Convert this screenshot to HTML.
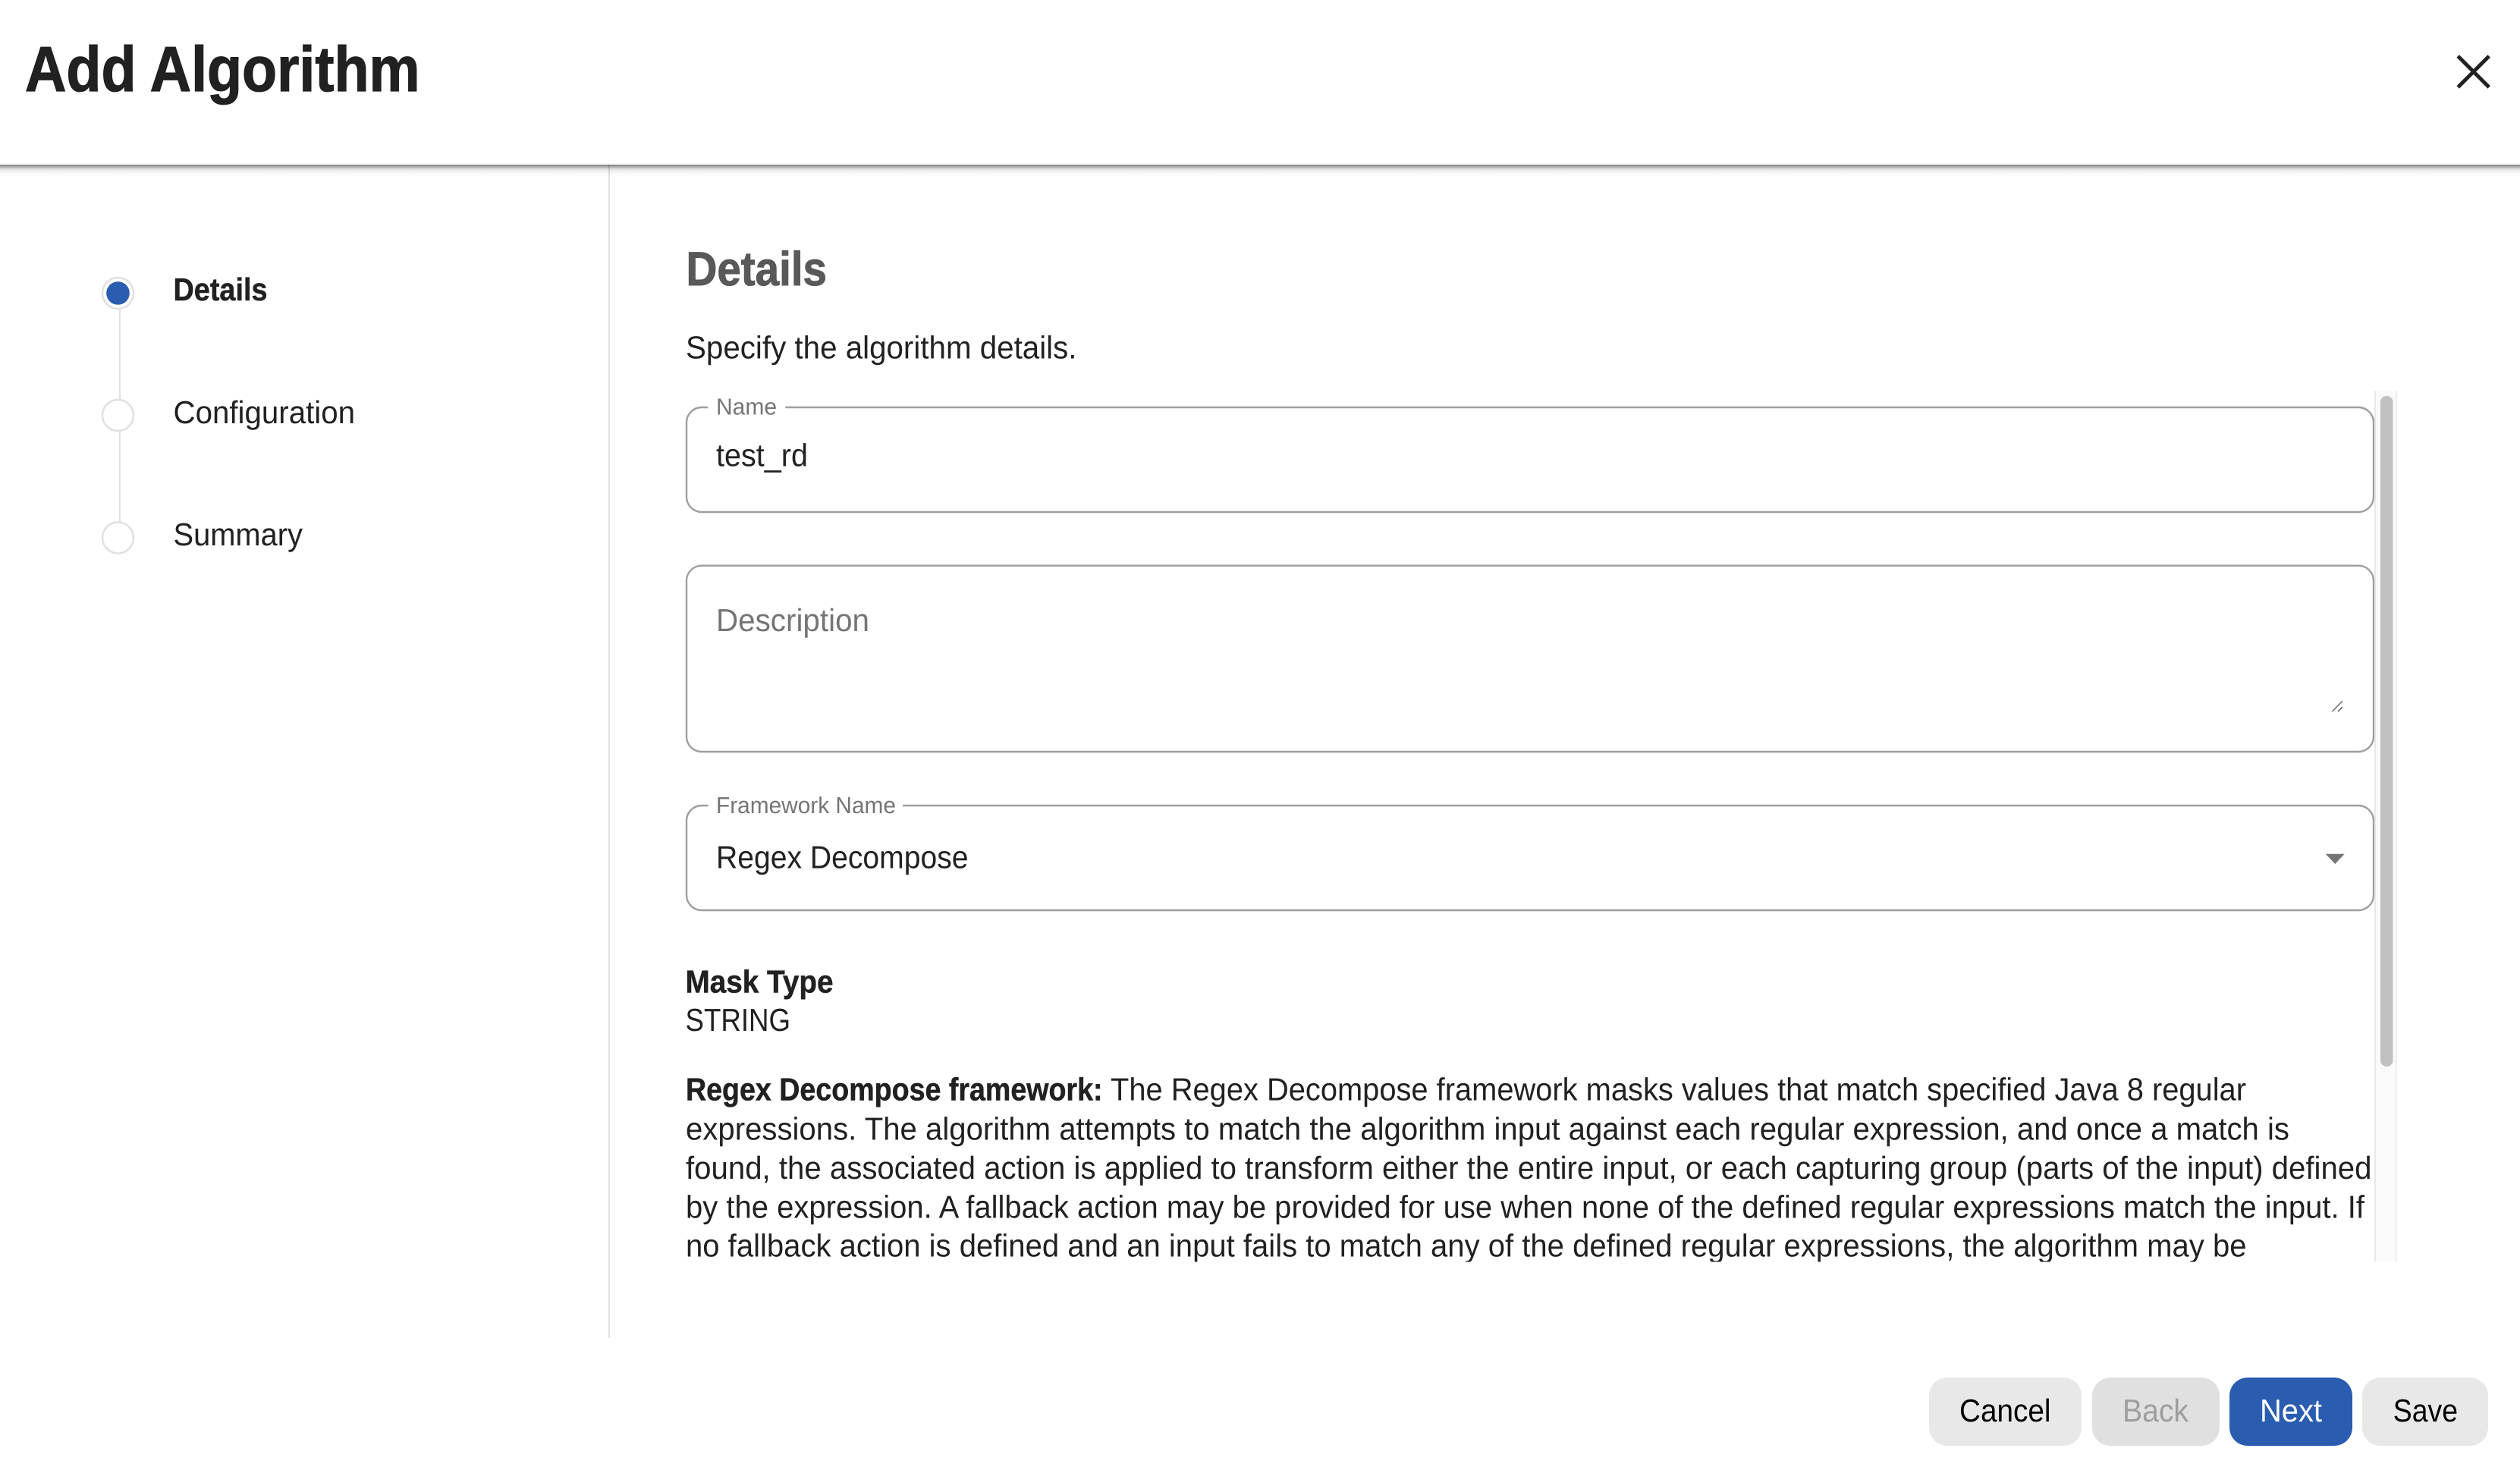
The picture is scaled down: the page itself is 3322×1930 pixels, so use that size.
<!DOCTYPE html>
<html lang="en">
<head>
<meta charset="utf-8">
<title>Add Algorithm</title>
<style>
html,body{margin:0;padding:0;background:#fff;width:3322px;height:1930px;overflow:hidden}
svg{display:block;position:absolute;left:0;top:0}
text{font-family:"Liberation Sans",Arial,sans-serif;fill:#212121;font-size:42px;text-rendering:geometricPrecision}
.b{font-weight:700;stroke:#212121;stroke-width:.5px}
.l{font-size:30.5px;fill:#757575}
.f{fill:none;stroke:#9e9e9e;stroke-width:2.4}
</style>
</head>
<body>
<svg width="3322" height="1930" viewBox="0 0 3322 1930" xmlns="http://www.w3.org/2000/svg">
<defs>
<linearGradient id="sh" x1="0" y1="0" x2="0" y2="1">
<stop offset="0" stop-color="#000" stop-opacity=".5"/>
<stop offset=".15" stop-color="#000" stop-opacity=".36"/>
<stop offset=".35" stop-color="#000" stop-opacity=".13"/>
<stop offset=".6" stop-color="#000" stop-opacity=".04"/>
<stop offset="1" stop-color="#000" stop-opacity="0"/>
</linearGradient>
<clipPath id="cl"><rect x="890" y="1270" width="2240" height="393.5"/></clipPath>
</defs>
<rect width="3322" height="1930" fill="#fff"/>

<!-- side divider -->
<rect x="802" y="217" width="2" height="1547" fill="#e0e0e0"/>

<!-- header -->
<text class="b" x="33" y="120" style="font-size:84px;stroke-width:1.2px" textLength="520.5" lengthAdjust="spacingAndGlyphs">Add Algorithm</text>
<path d="M3240.2 74 L3281.2 115 M3281.2 74 L3240.2 115" fill="none" stroke="#212121" stroke-width="5"/>
<rect x="0" y="217" width="3322" height="16" fill="url(#sh)"/>

<!-- stepper -->
<rect x="157" y="406" width="2" height="122" fill="#e0e0e0"/>
<rect x="157" y="567" width="2" height="123" fill="#e0e0e0"/>
<circle cx="155.5" cy="386.5" r="20.5" fill="#fff" stroke="#e0e0e0" stroke-width="2.5"/>
<circle cx="155.5" cy="386.5" r="15.3" fill="#2a5db0"/>
<circle cx="155.5" cy="547.5" r="20.5" fill="#fff" stroke="#e0e0e0" stroke-width="2.5"/>
<circle cx="155.5" cy="709" r="20.5" fill="#fff" stroke="#e0e0e0" stroke-width="2.5"/>
<text class="b" x="228.5" y="396" textLength="124" lengthAdjust="spacingAndGlyphs">Details</text>
<text x="228.5" y="558" textLength="239.5" lengthAdjust="spacingAndGlyphs">Configuration</text>
<text x="228.5" y="719" textLength="170.5" lengthAdjust="spacingAndGlyphs">Summary</text>

<!-- heading -->
<text class="b" x="904.5" y="376" style="font-size:63px;fill:#595959;stroke:#595959;stroke-width:1px" textLength="185.5" lengthAdjust="spacingAndGlyphs">Details</text>
<text x="904" y="472.5" textLength="515.5" lengthAdjust="spacingAndGlyphs">Specify the algorithm details.</text>

<!-- Name field -->
<path class="f" d="M933.3 537 H925 A20 20 0 0 0 905 557 V655 A20 20 0 0 0 925 675 H3109 A20 20 0 0 0 3129 655 V557 A20 20 0 0 0 3109 537 H1035.3"/>
<text class="l" x="944" y="546.7" textLength="80" lengthAdjust="spacingAndGlyphs">Name</text>
<text x="944" y="614.3" textLength="121" lengthAdjust="spacingAndGlyphs">test_rd</text>

<!-- Description field -->
<rect class="f" x="905" y="745.7" width="2224" height="245.3" rx="20" ry="20"/>
<text x="944" y="832" style="fill:#757575" textLength="202" lengthAdjust="spacingAndGlyphs">Description</text>
<path d="M3074.5 938 L3088 924 M3082 938 L3088 932" fill="none" stroke="#6e6e6e" stroke-width="1.6"/>

<!-- Framework field -->
<path class="f" d="M933.6 1062 H925 A20 20 0 0 0 905 1082 V1180 A20 20 0 0 0 925 1200 H3109 A20 20 0 0 0 3129 1180 V1082 A20 20 0 0 0 3109 1062 H1190"/>
<text class="l" x="944" y="1072" textLength="237" lengthAdjust="spacingAndGlyphs">Framework Name</text>
<text x="944" y="1144.5" textLength="332.5" lengthAdjust="spacingAndGlyphs">Regex Decompose</text>
<path d="M3065.7 1125.7 H3090.7 L3078.2 1139 Z" fill="#757575"/>

<!-- scrollbar -->
<rect x="3130" y="515" width="30" height="1148.5" fill="#fafafa"/>
<rect x="3130" y="515" width="2" height="1148.5" fill="#e8e8e8"/>
<rect x="3158" y="515" width="2" height="1148.5" fill="#efefef"/>
<rect x="3138" y="522" width="16.5" height="884" rx="8" ry="8" fill="#c1c1c1"/>

<!-- content -->
<g clip-path="url(#cl)">
<text class="b" x="903.5" y="1308.5" textLength="195" lengthAdjust="spacingAndGlyphs">Mask Type</text>
<text x="903.5" y="1359" textLength="138.5" lengthAdjust="spacingAndGlyphs">STRING</text>
<text class="b" x="904" y="1450.7" textLength="549.5" lengthAdjust="spacingAndGlyphs">Regex Decompose framework:</text>
<text x="1464" y="1450.7" textLength="1497" lengthAdjust="spacingAndGlyphs">The Regex Decompose framework masks values that match specified Java 8 regular</text>
<text x="904" y="1502.7" textLength="2114" lengthAdjust="spacingAndGlyphs">expressions. The algorithm attempts to match the algorithm input against each regular expression, and once a match is</text>
<text x="904" y="1554" textLength="2222.5" lengthAdjust="spacingAndGlyphs">found, the associated action is applied to transform either the entire input, or each capturing group (parts of the input) defined</text>
<text x="904" y="1605.7" textLength="2213" lengthAdjust="spacingAndGlyphs">by the expression. A fallback action may be provided for use when none of the defined regular expressions match the input. If</text>
<text x="904" y="1656.7" textLength="2057.5" lengthAdjust="spacingAndGlyphs">no fallback action is defined and an input fails to match any of the defined regular expressions, the algorithm may be</text>
</g>

<!-- footer buttons -->
<rect x="2543" y="1816" width="201" height="90" rx="24" ry="24" fill="#e8e8e8"/>
<rect x="2758" y="1816" width="168" height="90" rx="24" ry="24" fill="#e0e0e0"/>
<rect x="2939" y="1816" width="162" height="90" rx="24" ry="24" fill="#2a5db0"/>
<rect x="3114" y="1816" width="166" height="90" rx="24" ry="24" fill="#e8e8e8"/>
<text x="2583" y="1874" style="fill:#000" textLength="120.5" lengthAdjust="spacingAndGlyphs">Cancel</text>
<text x="2798" y="1874" style="fill:#9e9e9e" textLength="87" lengthAdjust="spacingAndGlyphs">Back</text>
<text x="2979" y="1874" style="fill:#fff" textLength="82" lengthAdjust="spacingAndGlyphs">Next</text>
<text x="3154.8" y="1874" style="fill:#000" textLength="85.2" lengthAdjust="spacingAndGlyphs">Save</text>
</svg>
</body>
</html>
